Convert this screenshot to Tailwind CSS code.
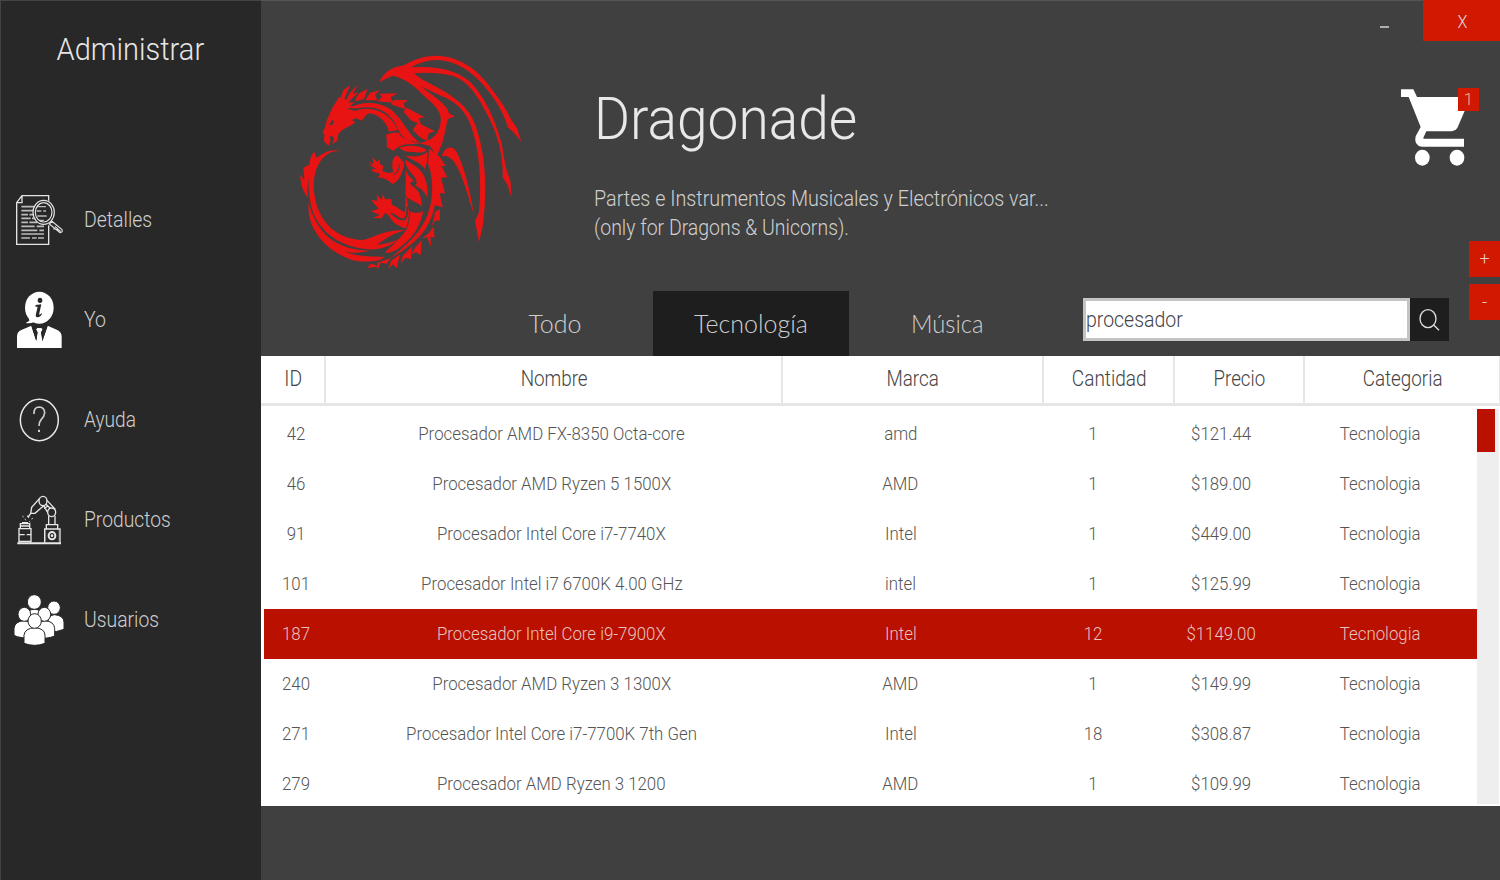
<!DOCTYPE html>
<html lang="es">
<head>
<meta charset="utf-8">
<title>Dragonade</title>
<script src="https://cdn.jsdelivr.net/npm/@tailwindcss/browser@4"></script>
</head>
<body class="w-[1500px] h-[880px] overflow-hidden bg-[#404040] font-['Roboto',sans-serif] font-light">
<div class="flex w-[1500px] h-[880px] shadow-[inset_0_1px_0_#555]">

  <aside class="w-[261px] h-full bg-[#282828] border-l border-t border-[#444] shrink-0 flex flex-col">
    <h1 class="h-[96px] flex items-center justify-center text-[32px] text-[#e6e6e6] font-light"><span class="inline-block scale-x-[0.907] -ml-[2px]">Administrar</span></h1>
    <nav class="mt-[72px] flex flex-col text-[22px] text-[#cfcfcf]">
      <a class="h-[100px] flex items-center pl-[13px] gap-[20px]">
        <svg class="mt-[2px] w-[50px] h-[60px] shrink-0" viewBox="42 30 150 180" fill="none" stroke="#e4e4e4" stroke-width="4">
          <path d="M146 62V47H66L50 68V193H146V136M50 68H66V47"/>
          <path d="M64 80H104M64 92H100M64 104H84M88 104H100M64 115H92M96 115H106M64 127H84M88 127H112M64 139H104M110 139H132M64 151H112M118 151H132M64 162H132M64 174H90M96 174H110M114 174H132" stroke="#bbb" stroke-width="5"/>
          <path d="M112 80H138M110 93H124M130 93H138M112 108H140M118 121H132" stroke="#bbb" stroke-width="4"/>
          <ellipse cx="131" cy="97" rx="32" ry="36" stroke-width="3.5"/><ellipse cx="131" cy="97" rx="25" ry="29" stroke-width="3.5"/>
          <path d="M148 132L156 124L186 149Q189 157 180 158ZM165 139L182 155M160 146L178 150" stroke-width="3.5"/>
        </svg><span class="inline-block origin-left scale-x-[0.885]">Detalles</span></a>
      <a class="h-[100px] flex items-center pl-[13px] gap-[20px]">
        <svg class="mt-[2px] w-[50px] h-[60px] shrink-0" viewBox="42 330 150 180" fill="#fff">
          <ellipse cx="118" cy="383" rx="43" ry="48"/><path d="M86 410L88 422L77 429Q90 432 103 426Z"/>
          <path d="M51 504V470Q51 455 64 450L94 437L109 484L113 456L108 448L113 444H123L128 448L123 456L127 484L143 437L172 450Q185 456 185 470V504Z"/>
          <path d="M94 437L109 484L113 456L108 448L113 444H123L128 448L123 456L127 484L143 437L130 438H106Z" fill="#282828"/>
          <path d="M109 448L113 444H123L127 448L122 458L127 486H109L114 458Z"/>
          <g fill="#282828"><ellipse cx="120" cy="361" rx="7" ry="8"/><path d="M107 375L124 373L117 404Q120 404 126 399L124 406Q117 414 109 411Q106 408 108 401L113 380H106Z"/></g>
        </svg><span class="inline-block origin-left scale-x-[0.885]">Yo</span></a>
      <a class="h-[100px] flex items-center pl-[13px] gap-[20px]">
        <svg class="mt-[2px] w-[50px] h-[60px] shrink-0" viewBox="42 30 150 180" fill="none" stroke="#e8e8e8" stroke-width="4.5">
          <ellipse cx="118" cy="120" rx="57" ry="62"/><path d="M102 102Q101 81 118 81Q134 82 134 99Q133 109 124 118Q117 126 117 138" stroke="#ccc" stroke-width="5"/><path d="M117 149V156" stroke="#ccc" stroke-width="6"/>
        </svg><span class="inline-block origin-left scale-x-[0.87]">Ayuda</span></a>
      <a class="h-[100px] flex items-center pl-[13px] gap-[20px]">
        <svg class="mt-[2px] w-[50px] h-[60px] shrink-0" viewBox="42 330 150 180" fill="none" stroke="#e8e8e8" stroke-width="4">
          <path d="M52 490H183" stroke-width="6"/><path d="M57 488V446H93V488M57 464H74M80 464H93M57 484H93M61 446V431H89V446M61 438H89M66 428H84"/>
          <path d="M134 488V447H180V488M139 447V434H173V447M146 434V407M165 434V407"/><ellipse cx="156" cy="467" rx="10" ry="11" stroke-width="6"/><circle cx="156" cy="467" r="2"/>
          <path d="M137 450V484M177 450V484" stroke="#999" stroke-width="2"/>
          <ellipse cx="129" cy="363" rx="12" ry="14"/><ellipse cx="155" cy="397" rx="12" ry="13"/>
          <path d="M119 355L95 382L92 400H105L131 377M92 400L85 411L82 407M141 361L166 388M131 377L143 397M137 372L150 384M132 385L144 378"/>
          <path d="M68 407L70 412M75 416L77 421M94 417L99 415M88 423L90 427" stroke="#bbb" stroke-width="3"/>
        </svg><span class="inline-block origin-left scale-x-[0.875]">Productos</span></a>
      <a class="h-[100px] flex items-center pl-[13px] gap-[20px]">
        <svg class="mt-[2px] w-[50px] h-[60px] shrink-0" viewBox="42 630 150 180" fill="#fff" stroke="#282828" stroke-width="3">
          <path d="M144 754V724Q146 706 163 704Q192 706 192 728V748Q170 758 144 754Z"/><ellipse cx="162" cy="683" rx="19" ry="20"/>
          <path d="M80 730V705Q85 688 103 688Q122 688 128 705V730Z"/><ellipse cx="103" cy="666" rx="21" ry="22"/>
          <path d="M42 766V744Q45 724 72 722Q100 724 100 750V774Q60 776 42 766Z"/><ellipse cx="73" cy="703" rx="19" ry="21"/>
          <path d="M108 774V744Q112 724 134 722Q163 724 164 746V768Q140 778 108 774Z"/><ellipse cx="133" cy="703" rx="19" ry="21"/>
          <path d="M72 790V765Q75 745 104 743Q134 745 135 765V790Q104 802 72 790Z"/><ellipse cx="104" cy="723" rx="20" ry="22"/>
        </svg><span class="inline-block origin-left scale-x-[0.88]">Usuarios</span></a>
    </nav>
  </aside>

  <main class="relative w-[1239px] h-full flex flex-col">
    <header class="h-[291px] flex">
      <svg class="mt-[40px] ml-[29px] w-[240px] h-[240px] shrink-0" viewBox="0 0 720 720" fill="#e81313">
        <!-- wing -->
        <path d="M266 127C285 95 300 82 338 77C375 58 400 47 440 47C505 49 560 85 600 140C630 180 648 205 661 235L682 266L694 306L672 278L653 262C645 225 615 175 580 135C545 95 500 62 440 60C410 60 385 70 363 82C440 77 500 88 545 130C590 180 615 240 635 310C642 350 645 370 648 385L662 425L664 472L653 436L638 412C640 350 625 290 600 240C570 180 540 125 490 108C450 98 410 97 372 100C400 125 440 138 480 165C530 200 552 230 567 290C585 360 588 420 584 500L578 560L567 607L555 543L566 520C575 440 570 350 550 280C535 225 510 195 470 175C440 162 415 150 392 139C425 165 452 180 472 207L478 222L495 228L474 237C465 265 465 300 440 347L420 318L388 310C430 300 448 280 452 245C455 220 440 200 410 175C380 145 350 115 307 107Z"/>
        <path d="M455 350C462 322 485 312 500 336C524 385 540 450 552 525C532 460 515 400 495 370C480 350 470 345 455 350Z"/>
        <!-- head -->
        <path fill-rule="evenodd" d="M148 167C142 185 125 200 118 225C105 245 110 262 98 275L103 285L102 303L115 318L122 300L118 290L126 288L133 296L126 313L142 302L145 282C160 262 180 262 196 246L185 240L197 235L218 242L210 222L195 212L172 207L192 198L180 198L195 186L174 188L205 157L188 162L204 133L180 158L168 181L163 176L181 135L160 150L152 175ZM117 256L127 240L132 244L128 254Z"/>
        <!-- neck -->
        <path d="M178 205C210 183 270 182 308 213C345 248 355 285 392 310L352 300C333 290 325 270 315 250C295 212 250 193 205 205Z"/>
        <path d="M196 213C240 195 300 215 323 270L297 275C287 235 250 215 232 222L216 240L212 228Z"/>
        <!-- upper spikes -->
        <path d="M193 184L207 160L233 147L227 162L222 178ZM226 181L240 158L271 150L256 163L261 181ZM262 184L276 171L268 161L324 160L302 171L308 188ZM303 193L310 180L354 180L341 190L346 208ZM340 215L350 203L404 232L386 235L393 253L364 242ZM368 270L383 248L435 274L416 280L412 303L390 292Z"/>
        <!-- shoulder and chest -->
        <path d="M288 285C300 280 315 275 327 279C333 295 360 303 390 312L350 313C335 316 320 320 312 333L290 322C292 305 290 295 288 285Z"/>
        <path d="M328 322C360 312 395 318 410 329C400 343 380 336 365 336C350 336 335 333 328 322Z"/>
        <path d="M342 345C370 353 395 350 411 336C415 355 410 370 404 388C395 368 365 360 342 345Z"/>
        <!-- arm -->
        <path d="M234 373L250 378L236 365L251 371L247 352L262 367L268 356L270 372L280 378L277 394L295 399L310 397C303 370 308 350 322 346L343 369C339 395 328 425 307 432C295 420 280 413 262 412L272 402L250 395L243 388L258 387Z"/>
        <path d="M327 372C330 385 322 400 309 406" fill="none" stroke="#404040" stroke-width="3"/>
        <!-- belly -->
        <path d="M346 358C365 374 390 382 402 408C410 425 415 450 411 472C403 452 388 442 372 436C386 436 380 415 366 402C353 388 346 375 346 358Z"/>
        <path d="M348 388C351 408 366 416 373 424C352 426 362 436 374 443C388 452 396 475 395 500C385 485 352 482 346 463Z"/>
        <!-- leg and thigh -->
        <path d="M243 480L262 482L260 463L275 480L279 461L285 478L304 477L306 494C320 500 335 512 344 516C348 500 345 480 347 462C355 490 353 500 358 513C375 522 393 518 400 514C390 560 370 595 322 628C300 640 290 640 285 637C310 615 335 590 350 568C340 560 322 560 305 540C298 530 293 520 285 520L275 535L248 534L270 525L243 514L266 506Z"/>
        <path d="M303 520C318 527 328 542 342 538C352 532 353 518 352 500" fill="none" stroke="#404040" stroke-width="6"/>
        <path d="M360 505C358 535 354 555 348 568" fill="none" stroke="#404040" stroke-width="3"/>
        <!-- back with barbs -->
        <path d="M417 325L450 352L467 378L454 378L472 412L453 413L465 460L449 460L458 502L434 496C420 570 380 610 300 655C370 600 418 550 425 470C429 430 424 395 414 372Z"/>
        <path d="M422 475C415 560 370 610 312 648C380 612 412 560 422 475Z"/>
        <path d="M450 508L449 543L437 540L425 560L432 535L435 515ZM430 560L434 592L421 590L424 622L411 592L397 594L416 580ZM395 600L392 645L378 637L364 642L376 622ZM366 618L363 657L345 653L332 673L338 648ZM330 643L320 685L308 673L294 688L304 662ZM302 654L290 671L272 668L262 691L262 668ZM250 672L264 680L232 684L240 673Z"/>
        <!-- tail -->
        <path d="M152 333C105 330 75 370 71 430C70 530 130 600 220 600C260 590 280 570 345 570C310 580 280 600 262 614C290 612 310 605 325 598C300 620 270 630 235 628C150 620 100 580 75 530C60 500 53 450 57 410C65 360 105 320 152 333Z"/>
        <path d="M110 336L78 353L73 335C60 350 60 360 58 374L40 383C42 400 42 410 43 420L31 404C31 430 38 455 54 473C50 430 55 380 110 336Z"/>
        <path d="M55 488C65 520 80 560 115 592C150 622 200 632 240 632C200 640 185 640 160 632C195 650 240 650 282 650C275 664 230 668 195 662C150 650 100 620 72 568C58 540 55 520 55 488Z"/>
      </svg>
      <div class="ml-[64px] w-[500px] shrink-0 text-[#d0d0d0]">
        <h2 class="mt-[84px] h-[70px] leading-[70px] text-[60px] text-[#e8e8e8] font-light"><span class="inline-block origin-left scale-x-[0.917]">Dragonade</span></h2>
        <p class="mt-[31px] text-[22px] leading-[28.5px] whitespace-nowrap"><span class="block origin-left scale-x-[0.898]">Partes e Instrumentos Musicales y Electrónicos var...</span><span class="block origin-left scale-x-[0.885]">(only for Dragons &amp; Unicorns).</span></p>
      </div>
      <div class="flex-1 flex flex-col items-end">
        <div class="flex text-[18px] text-[#ddd]">
          <button class="w-[77px] h-[41px] flex items-center justify-center"><span class="w-[9px] h-[2px] mt-[13px] bg-[#b0b0b0]"></span></button>
          <button class="w-[77px] h-[41px] bg-[#d01900] flex items-center justify-center"><span class="inline-block scale-x-[0.9] ml-[2px] mt-px">X</span></button>
        </div>
        <div class="relative mt-[46px] mr-[20px] w-[80px] h-[80px]">
          <svg class="w-[80px] h-[80px]" viewBox="150 260 240 240" fill="#fff">
            <path d="M153 267H190L201 290H362L322 383Q316 392 306 393H229L220 412Q219 415 222 415H342V439H216Q190 436 197 408L212 380L176 290H153Z"/><ellipse cx="217" cy="472" rx="22" ry="24"/><ellipse cx="321" cy="472" rx="22" ry="24"/>
          </svg>
          <span class="absolute left-[58px] top-[1px] w-[21px] h-[23px] bg-[#d01900] text-[#e8b090] text-[17px] flex items-center justify-center">1</span>
        </div>
      </div>
    </header>

    <div class="h-[64.5px] flex pl-[196px] font-['Lato',sans-serif] text-[#cfcfcf] text-[25px]">
      <div class="w-[196px] flex items-center justify-center"><span class="inline-block">Todo</span></div>
      <div class="w-[196px] bg-[#1e1e1e] flex items-center justify-center"><span class="inline-block">Tecnología</span></div>
      <div class="w-[196px] flex items-center justify-center"><span class="inline-block scale-x-[0.95]">Música</span></div>
      <div class="ml-[38px] mt-[7px] flex h-[43px] font-['Roboto',sans-serif]">
        <div class="w-[327px] h-full bg-white border-[3px] border-[#c4c4c4] flex items-center text-[22px] text-[#444]"><span class="inline-block origin-left scale-x-[0.885]">procesador</span></div>
        <button class="w-[39px] h-full bg-[#1e1e1e] flex items-center justify-center">
          <svg class="w-[22px] h-[24px] mr-px" viewBox="1074 233 66 72" fill="none" stroke="#ddd" stroke-width="4"><ellipse cx="1104" cy="265" rx="24" ry="27"/><path d="M1121 284L1137 300"/></svg>
        </button>
      </div>
    </div>
    <div class="absolute right-0 top-[241px] flex flex-col gap-[7px] text-[18px] text-[#e8c8c0]">
      <button class="w-[31px] h-[36px] pb-[2px] bg-[#d01900]">+</button>
      <button class="w-[31px] h-[36px] pb-[2px] bg-[#d01900]">-</button>
    </div>

    <section class="h-[450px] bg-white text-[#555]">
      <div class="h-[50px] flex border-b-[3px] border-[#e6e6e6] text-[22px] text-[#444]">
        <div class="w-[65px] pb-px pl-[2px] border-r-2 border-[#e6e6e6] flex items-center justify-center"><span class="inline-block scale-x-[0.88]">ID</span></div>
        <div class="w-[457px] pb-px pl-[2px] border-r-2 border-[#e6e6e6] flex items-center justify-center"><span class="inline-block scale-x-[0.855]">Nombre</span></div>
        <div class="w-[261px] pb-px border-r-2 border-[#e6e6e6] flex items-center justify-center"><span class="inline-block scale-x-[0.855]">Marca</span></div>
        <div class="w-[131px] pb-px pl-[2px] border-r-2 border-[#e6e6e6] flex items-center justify-center"><span class="inline-block scale-x-[0.865]">Cantidad</span></div>
        <div class="w-[130px] pb-px border-r-2 border-[#e6e6e6] flex items-center justify-center"><span class="inline-block scale-x-[0.85]">Precio</span></div>
        <div class="w-[195px] pb-px pl-[2px] border-r border-[#e6e6e6] flex items-center justify-center"><span class="inline-block scale-x-[0.855]">Categoria</span></div>
      </div>
      <div class="flex pt-[3px] pl-[2.5px]">
        <div id="rows" class="w-[1213px] h-[397px] overflow-hidden text-[18px]"></div>
        <div class="w-[22px] h-[395px] bg-[#eee]"><div class="w-[18px] h-[43px] bg-[#b91000]"></div></div>
      </div>
    </section>
  </main>
</div>
<script>
const data = [
  ['42','Procesador AMD FX-8350 Octa-core','amd','1','$121.44'],
  ['46','Procesador AMD Ryzen 5 1500X','AMD','1','$189.00'],
  ['91','Procesador Intel Core i7-7740X','Intel','1','$449.00'],
  ['101','Procesador Intel i7 6700K 4.00 GHz','intel','1','$125.99'],
  ['187','Procesador Intel Core i9-7900X','Intel','12','$1149.00'],
  ['240','Procesador AMD Ryzen 3 1300X','AMD','1','$149.99'],
  ['271','Procesador Intel Core i7-7700K 7th Gen','Intel','18','$308.87'],
  ['279','Procesador AMD Ryzen 3 1200','AMD','1','$109.99'],
];
document.getElementById('rows').innerHTML = data.map((r, i) =>
  `<div class="grid grid-cols-[64px_448px_250px_135px_121px_197px] h-[50px] items-center text-center whitespace-nowrap ${i === 4 ? 'bg-[#b91000] text-[#e6c4c0]' : ''}">` +
  [...r, 'Tecnologia'].map(c => `<div><span class="inline-block scale-x-[0.935]">${c}</span></div>`).join('') + '</div>').join('');
</script>
</body>
</html>
